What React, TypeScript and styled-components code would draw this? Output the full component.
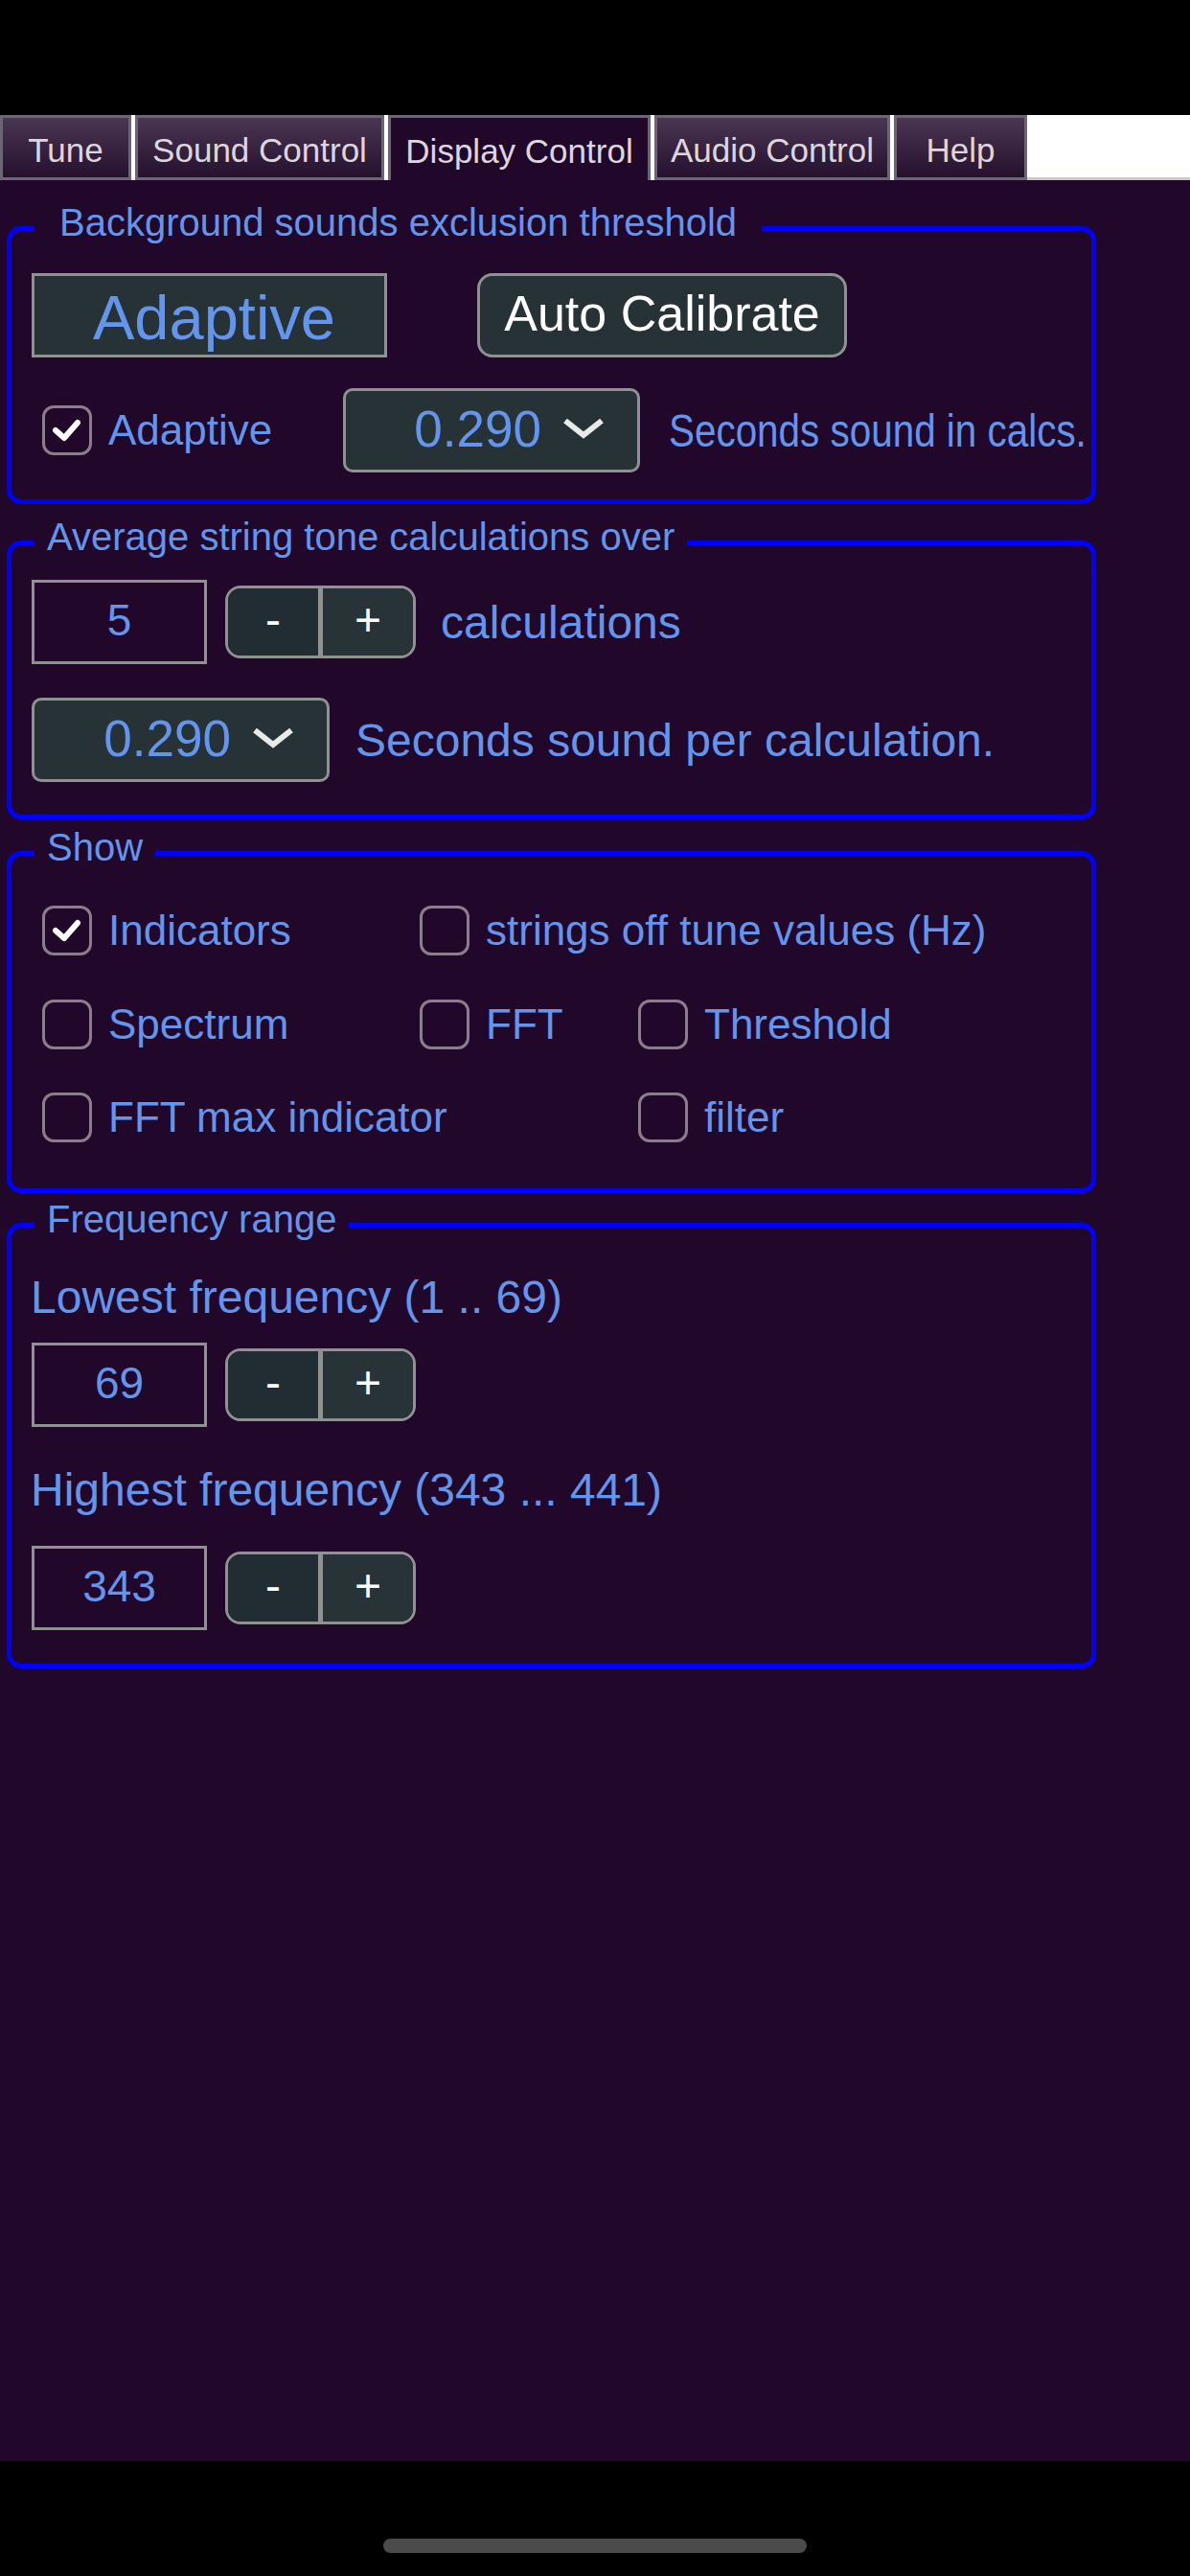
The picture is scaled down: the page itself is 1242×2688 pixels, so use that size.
import React from 'react';
import styled, { createGlobalStyle } from 'styled-components';

const GlobalStyle = createGlobalStyle`
	html, body {
		margin: 0;
		padding: 0;
		background: #000;
	}
	body {
		font-family: 'Liberation Sans', Arial, Helvetica, sans-serif;
	}
	* {
		box-sizing: border-box;
	}
`;

const BLUE = '#6495ed';
const PAGE = '#21082b';
const GREY = '#8e9392';

const Screen = styled.div`
	width: 1242px;
	height: 2688px;
	display: flex;
	flex-direction: column;
	background: ${PAGE};
	overflow: hidden;
`;

const StatusBar = styled.div`
	height: 120px;
	flex: none;
	background: #000;
`;

const TabBar = styled.nav`
	height: 68px;
	flex: none;
	display: flex;
	gap: 4px;
	background: #fff;
`;

const Tab = styled.div<{ $w: number; $active?: boolean }>`
	width: ${p => p.$w}px;
	flex: none;
	display: flex;
	align-items: center;
	justify-content: center;
	border: 3px solid #6c6576;
	border-bottom: ${p => (p.$active ? 'none' : '3px solid #6c6576')};
	background: ${p => (p.$active ? PAGE : 'linear-gradient(#4a3553, #25102d)')};
	color: #ddd6de;
	font-size: 35px;
	padding-top: 5px;
`;

const TabFiller = styled.div`
	flex: 1;
	border-bottom: 3px solid #c9c9c9;
	margin-left: -4px;
`;

const Content = styled.main`
	flex: 1;
	padding-top: 21px;
	display: flex;
	flex-direction: column;
	align-items: flex-start;
`;

const Group = styled.fieldset<{ $mt: number; $pt: number; $pb: number }>`
	width: 1137px;
	margin: ${p => p.$mt}px 0 0 7px;
	border: 5px solid #0000ff;
	border-radius: 15px;
	padding: ${p => p.$pt}px 21px ${p => p.$pb}px;
	min-width: 0;
`;

const Legend = styled.legend<{ $pad: number }>`
	margin-left: 3px;
	padding: 0 ${p => p.$pad}px 12px;
	font-size: 40px;
	line-height: 46px;
	color: ${BLUE};
	white-space: nowrap;
`;

const Row = styled.div<{ $mt?: number; $gap: number }>`
	display: flex;
	align-items: center;
	gap: ${p => p.$gap}px;
	margin-top: ${p => p.$mt || 0}px;
	height: 88px;
`;

const ModeBox = styled.div`
	width: 371px;
	height: 88px;
	flex: none;
	display: flex;
	align-items: center;
	justify-content: center;
	border: 3px solid ${GREY};
	background: #263236;
	color: ${BLUE};
	font-size: 65px;
	padding: 4px 0 0 10px;
`;

const Button = styled.button`
	width: 386px;
	height: 88px;
	flex: none;
	border: 3px solid ${GREY};
	border-radius: 16px;
	background: #263236;
	color: #fff;
	font-family: inherit;
	font-size: 52px;
	padding: 0 0 4px;
`;

const CheckItem = styled.label<{ $w?: number }>`
	display: flex;
	align-items: center;
	gap: 17px;
	flex: none;
	width: ${p => (p.$w ? `${p.$w}px` : 'auto')};
	color: ${BLUE};
	font-size: 44px;
	white-space: nowrap;
`;

const Box = styled.span`
	width: 52px;
	height: 52px;
	flex: none;
	margin-left: 11px;
	border: 3px solid #8b7d8c;
	border-radius: 12px;
	display: flex;
	align-items: center;
	justify-content: center;
`;

const Select = styled.div<{ $w: number }>`
	width: ${p => p.$w}px;
	height: 88px;
	flex: none;
	display: flex;
	align-items: center;
	justify-content: flex-end;
	gap: 22px;
	padding: 0 34px 4px 0;
	border: 3px solid ${GREY};
	border-radius: 10px;
	background: #263236;
	color: ${BLUE};
	font-size: 53px;
`;

const Text = styled.span<{ $ml?: number }>`
	flex: none;
	margin-left: ${p => p.$ml || 0}px;
	color: ${BLUE};
	font-size: 48px;
	white-space: nowrap;
`;

const SqueezedText = styled(Text)`
	display: inline-block;
	transform: scaleX(0.842);
	transform-origin: left center;
`;

const NumberBox = styled.div`
	width: 183px;
	height: 88px;
	flex: none;
	display: flex;
	align-items: center;
	justify-content: center;
	border: 3px solid ${GREY};
	color: ${BLUE};
	font-size: 46px;
	padding-bottom: 4px;
`;

const Stepper = styled.div`
	width: 199px;
	height: 76px;
	flex: none;
	display: flex;
	border: 3px solid ${GREY};
	border-radius: 16px;
	overflow: hidden;
`;

const StepButton = styled.div<{ $dark?: boolean }>`
	flex: 1;
	display: flex;
	align-items: center;
	justify-content: center;
	background: ${p => (p.$dark ? '#212d33' : '#283337')};
	color: #fff;
	font-size: 48px;
	padding-bottom: 6px;
	& + & {
		border-left: 5px solid ${GREY};
	}
`;

const ShowGrid = styled.div`
	display: grid;
	grid-template-columns: 394px 228px 1fr;
	grid-auto-rows: 52px;
	row-gap: 45.5px;
`;

const Wide = styled.div`
	grid-column: span 2;
`;

const FieldLabel = styled.div<{ $mt: number }>`
	color: ${BLUE};
	font-size: 48px;
	line-height: 54px;
	margin: ${p => p.$mt}px 0 0 -1px;
`;

const Bottom = styled.div`
	height: 120px;
	flex: none;
	background: #000;
	display: flex;
	justify-content: center;
	padding-top: 81px;
`;

const HomeBar = styled.div`
	width: 442px;
	height: 15px;
	border-radius: 8px;
	background: #4b4b4b;
`;

const Check = ({ on }: { on?: boolean }) => (
	<Box>
		{on && (
			<svg width="46" height="46" viewBox="0 0 46 46">
				<path d="M11 23 L20 31 L34 15" fill="none" stroke="#fff" strokeWidth="6" strokeLinecap="round" strokeLinejoin="round" />
			</svg>
		)}
	</Box>
);

const Chevron = () => (
	<svg width="44" height="22" viewBox="0 0 44 22">
		<path d="M3 3 L22 18 L41 3" fill="none" stroke="#e9e9e9" strokeWidth="6" />
	</svg>
);

const Dropdown = ({ w, value }: { w: number; value: string }) => (
	<Select $w={w}>
		<span>{value}</span>
		<Chevron />
	</Select>
);

const Spinner = ({ value }: { value: string }) => (
	<>
		<NumberBox>{value}</NumberBox>
		<Stepper>
			<StepButton $dark>-</StepButton>
			<StepButton>+</StepButton>
		</Stepper>
	</>
);

const tabs = [
	{ label: 'Tune', w: 137 },
	{ label: 'Sound Control', w: 260 },
	{ label: 'Display Control', w: 274, active: true },
	{ label: 'Audio Control', w: 246 },
	{ label: 'Help', w: 139 },
];

export default function App() {
	return (
		<Screen>
			<GlobalStyle />
			<StatusBar />
			<TabBar>
				{tabs.map(t => (
					<Tab key={t.label} $w={t.w} $active={t.active}>
						{t.label}
					</Tab>
				))}
				<TabFiller />
			</TabBar>
			<Content>
				<Group $mt={0} $pt={18} $pb={28}>
					<Legend $pad={26}>Background sounds exclusion threshold</Legend>
					<Row $gap={94}>
						<ModeBox>Adaptive</ModeBox>
						<Button>Auto Calibrate</Button>
					</Row>
					<Row $mt={32} $gap={0}>
						<CheckItem $w={325}>
							<Check on />
							Adaptive
						</CheckItem>
						<Dropdown w={310} value="0.290" />
						<SqueezedText $ml={30}>Seconds sound in calcs.</SqueezedText>
					</Row>
				</Group>

				<Group $mt={11} $pt={10} $pb={34}>
					<Legend $pad={13}>Average string tone calculations over</Legend>
					<Row $gap={19}>
						<Spinner value="5" />
						<Text $ml={7}>calculations</Text>
					</Row>
					<Row $mt={35} $gap={27}>
						<Dropdown w={311} value="0.290" />
						<Text>Seconds sound per calculation.</Text>
					</Row>
				</Group>

				<Group $mt={6} $pt={26} $pb={48}>
					<Legend $pad={13}>Show</Legend>
					<ShowGrid>
						<CheckItem>
							<Check on />
							Indicators
						</CheckItem>
						<Wide>
							<CheckItem>
								<Check />
								strings off tune values (Hz)
							</CheckItem>
						</Wide>
						<CheckItem>
							<Check />
							Spectrum
						</CheckItem>
						<CheckItem>
							<Check />
							FFT
						</CheckItem>
						<CheckItem>
							<Check />
							Threshold
						</CheckItem>
						<CheckItem>
							<Check />
							FFT max indicator
						</CheckItem>
						<div />
						<CheckItem>
							<Check />
							filter
						</CheckItem>
					</ShowGrid>
				</Group>

				<Group $mt={4} $pt={20} $pb={35}>
					<Legend $pad={13}>Frequency range</Legend>
					<FieldLabel $mt={0}>Lowest frequency (1 .. 69)</FieldLabel>
					<Row $mt={20} $gap={19}>
						<Spinner value="69" />
					</Row>
					<FieldLabel $mt={39}>Highest frequency (343 ... 441)</FieldLabel>
					<Row $mt={31} $gap={19}>
						<Spinner value="343" />
					</Row>
				</Group>
			</Content>
			<Bottom>
				<HomeBar />
			</Bottom>
		</Screen>
	);
}
